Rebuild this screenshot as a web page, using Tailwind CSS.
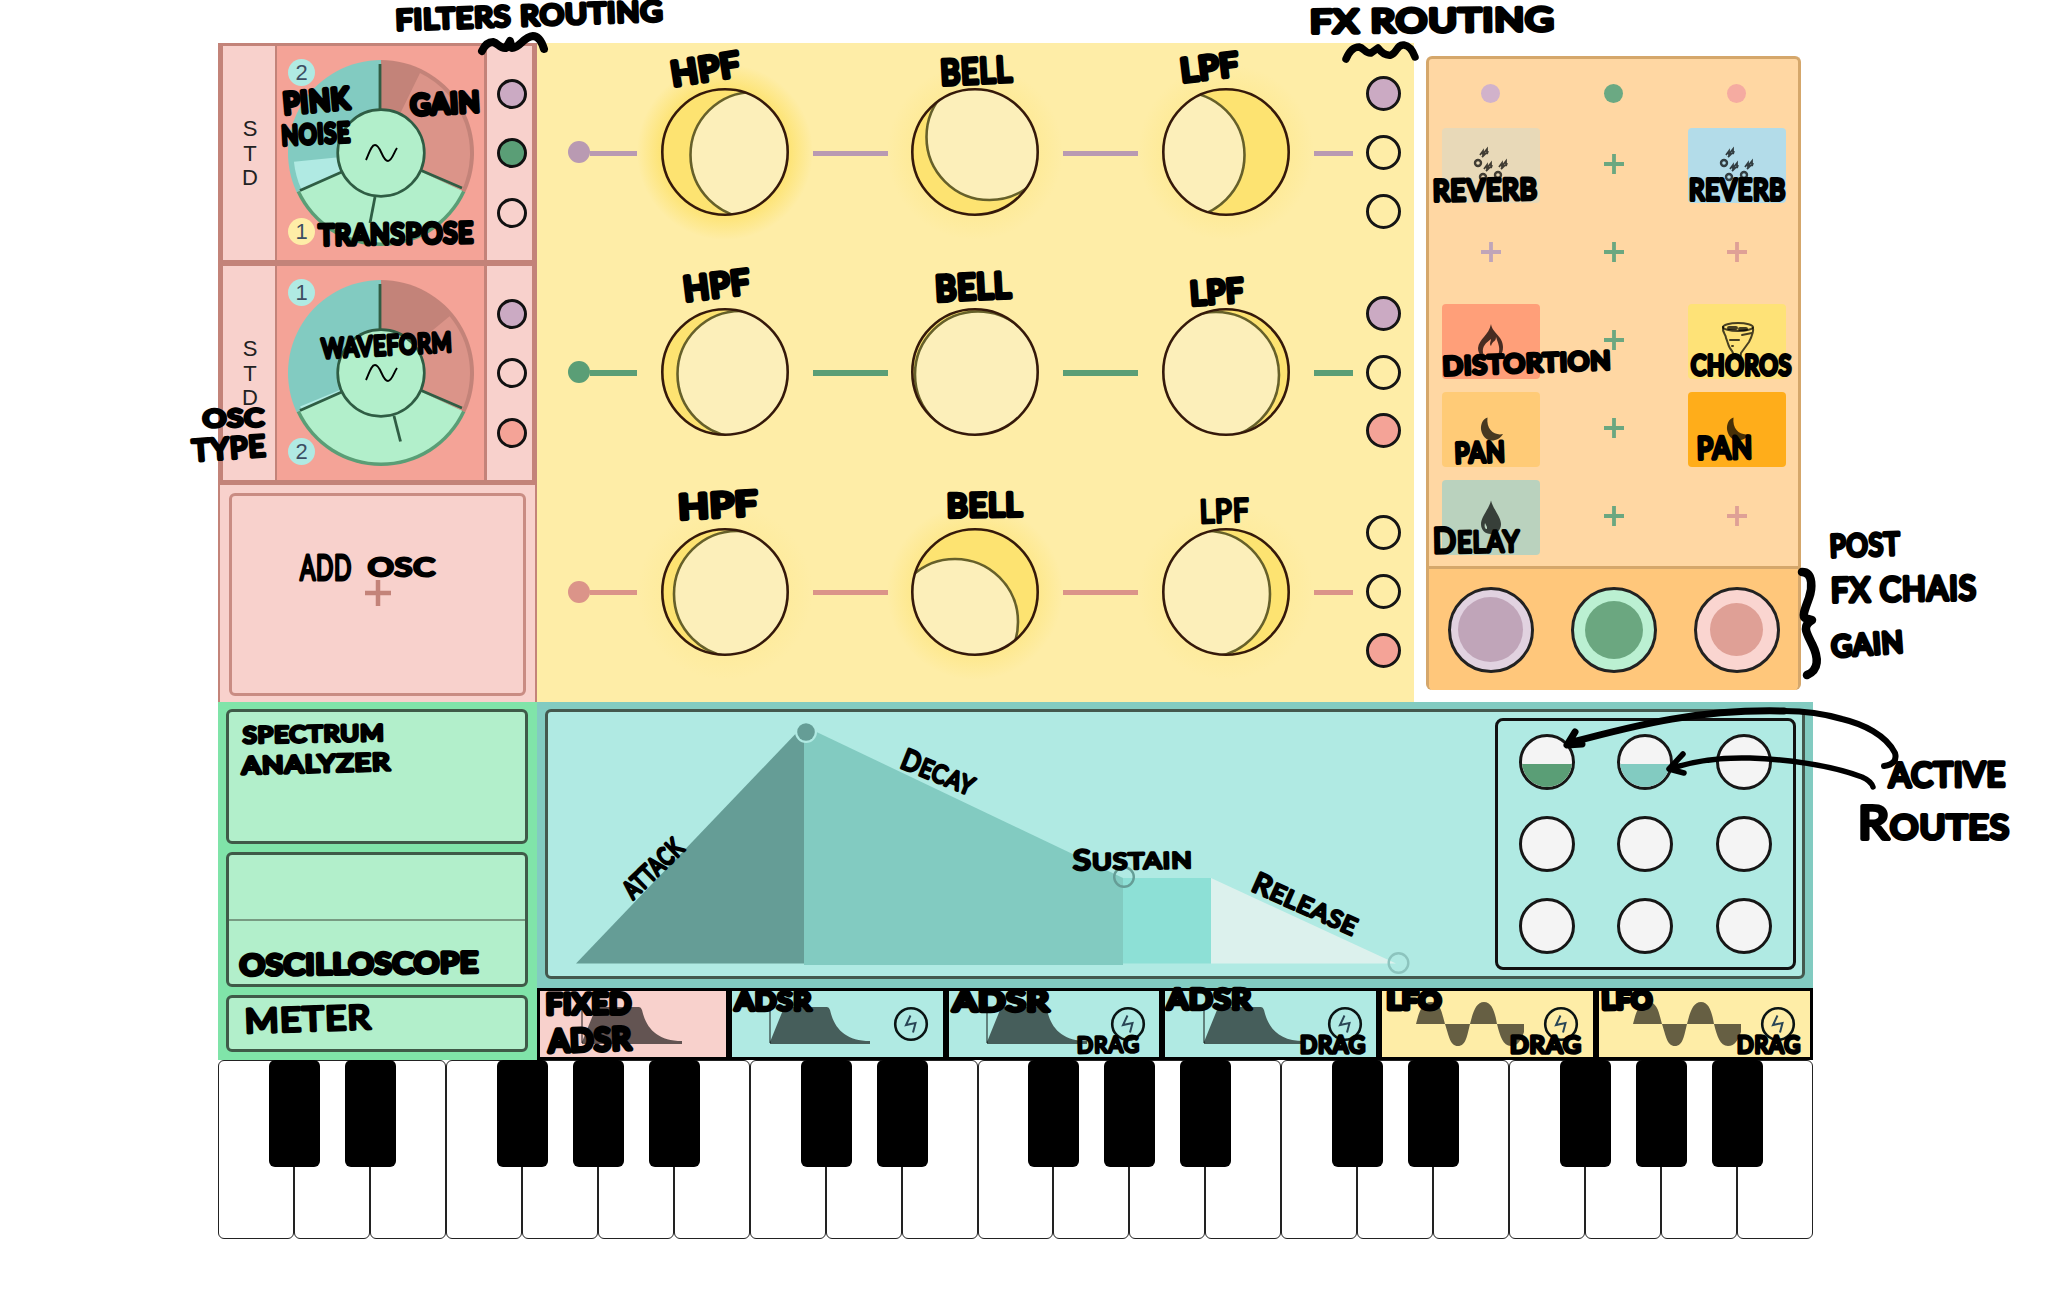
<!DOCTYPE html>
<html lang="en">
<head>
<meta charset="utf-8">
<title>Synth layout</title>
<script src="https://cdn.jsdelivr.net/npm/@tailwindcss/browser@4"></script>
</head>
<body class="relative h-[1301px] w-[2051px] overflow-hidden bg-white font-['Liberation_Sans',Arial,sans-serif]">

<!-- shared symbols -->
<svg width="0" height="0" class="absolute">
  <defs>
    <radialGradient id="glowStrong"><stop offset="0.7" stop-color="#fde371"/><stop offset="1" stop-color="#fde371" stop-opacity="0"/></radialGradient>
    <radialGradient id="glowSoft"><stop offset="0.7" stop-color="#fde371" stop-opacity="0.5"/><stop offset="1" stop-color="#fde371" stop-opacity="0"/></radialGradient>
    <clipPath id="disc"><circle cx="63" cy="63" r="63"/></clipPath>
    <symbol id="reverb" viewBox="0 0 98 75"><g fill="none" stroke="#000" stroke-opacity=".72" stroke-width="2.4"><circle cx="36" cy="35" r="3"/><circle cx="41" cy="49" r="3"/><circle cx="56" cy="47" r="3"/><path stroke-width="1.8" d="M38 27l3-4v3l4-5v5l1-3M40 29l4-4M42 41l3-4v3l4-5v5l1-3M44 43l4-4M57 39l3-4v3l4-5v5l1-3M59 41l4-4"/></g></symbol>
    <symbol id="fire" viewBox="0 0 98 75"><path fill="#000" fill-opacity=".72" fill-rule="evenodd" d="M49 20C50 29 61 32 61 43C61 50 58 55 49 56C40 55 36 50 36 44C37 35 47 31 49 20ZM54 33C54 38 51 36 49 42C47 40 49 37 49 35C44 39 40 42 41 49C43 53 56 54 57 48C58 43 56 39 54 33Z"/></symbol>
    <symbol id="tornado" viewBox="0 0 98 75"><g fill="none" stroke="#000" stroke-opacity=".72" stroke-width="2" stroke-linecap="round" stroke-linejoin="round"><ellipse cx="50" cy="23" rx="15" ry="4"/><path d="M35 23C34 29 38 30 38 34C40 38 40 43 44 47C46 51 47 56 52 57L53 49L61 38C63 34 66 27 65 24M54 31L64 29M42 36h9M44 42h1"/><path stroke-width="4" d="M41 24h7M52 25h6"/></g></symbol>
    <symbol id="moon" viewBox="0 0 98 75"><path fill="#000" fill-opacity=".72" d="M45.500 25.500C36 29 37 45 48 48.500C54 49 59 46 61 42C53 44 44 38 45.500 25.500Z"/></symbol>
    <symbol id="drop" viewBox="0 0 98 75"><path fill="#000" fill-opacity=".7" d="M49 20.500C51 29 59 37 59 44C59 50 55 54 49 54C43 54 39 50 39 44C39 37 47 29 49 20.500Z"/><path d="M43 43C42 47 43 49 45 49L45 47Z" fill="#bad2be"/></symbol>
    <symbol id="adsr" viewBox="0 0 102 40"><path d="M1 0V39" stroke="#000" stroke-opacity=".6" stroke-width="1.500" fill="none"/><path fill="#000" fill-opacity=".6" d="M1 38L14 6Q15 3 18 3H58Q60 3 61 6C65 24 76 37 101 37V40H1Z"/></symbol>
    <symbol id="lfo" viewBox="0 0 108 44"><path fill="#000" fill-opacity=".6" d="M0 22C3 10 6 0 15 0C25 0 26 12 29 22C33 34 34 44 42 44C50 44 51 34 54 22C57 10 60 0 68 0C76 0 79 10 81 22C84 34 87 44 95 44C102 44 105 38 108 30V22Z"/></symbol>
    <symbol id="bolt" viewBox="0 0 36 36"><circle cx="18" cy="18" r="15.800" fill="none" stroke="#0a1414" stroke-width="2.600"/><path d="M17.500 9.500L13 19L22.500 17L20 26.500" fill="none" stroke="#2a4656" stroke-width="2"/></symbol>
  </defs>
</svg>

<main class="flex w-[1595px] flex-col pt-[43px] ml-[218px]">
  <div class="flex h-[659px]">
    <!-- oscillators -->
    <section class="flex w-[319px] flex-col bg-[#f8d1cc]">
      <div class="flex h-[220px] border-x-[5px] border-t-[3px] border-b-[3px] border-[#c38379]">
        <div class="flex w-[54px] flex-col items-center justify-center border-r-[2.500px] border-[#c38379] pt-[2px] pl-[2px] text-[22px] leading-[24.500px] text-[#222]"><span>S</span><span>T</span><span>D</span></div>
        <div class="relative flex-1 bg-[#f4a397]" data-dial="1"></div>
        <div class="flex w-[48px] flex-col items-center justify-center gap-[29.500px] border-l-[3px] border-[#c38379] pl-[5px]">
          <i class="size-[30px] rounded-full border-[3px] border-[#111] bg-[#cbaac3]"></i><i class="size-[30px] rounded-full border-[3px] border-[#111] bg-[#5a9e76]"></i><i class="size-[30px] rounded-full border-[3px] border-[#111]"></i>
        </div>
      </div>
      <div class="flex h-[222px] border-x-[5px] border-t-[3px] border-b-[5px] border-[#c38379]">
        <div class="flex w-[54px] flex-col items-center justify-center border-r-[2.500px] border-[#c38379] pt-[2px] pl-[2px] text-[22px] leading-[24.500px] text-[#222]"><span>S</span><span>T</span><span>D</span></div>
        <div class="relative flex-1 bg-[#f4a397]" data-dial="2"></div>
        <div class="flex w-[48px] flex-col items-center justify-center gap-[29.500px] border-l-[3px] border-[#c38379] pl-[5px]">
          <i class="size-[30px] rounded-full border-[3px] border-[#111] bg-[#cbaac3]"></i><i class="size-[30px] rounded-full border-[3px] border-[#111]"></i><i class="size-[30px] rounded-full border-[3px] border-[#111] bg-[#f4a397]"></i>
        </div>
      </div>
      <div class="flex flex-1 border-x-[2.500px] border-[#c38379] px-[9px] pt-2 pb-[6px]">
        <div class="flex flex-1 items-center justify-center rounded-md border-[3px] border-[#c98c83] pb-[3px]">
          <svg width="26" height="26"><path d="M13 0V26M0 13H26" stroke="#c38379" stroke-width="4.500"/></svg>
        </div>
      </div>
    </section>

    <!-- filters -->
    <section id="filters" class="flex w-[877px] flex-col bg-[#feeda7]"></section>

    <!-- effects -->
    <section class="mt-[13px] ml-3 flex h-[634px] w-[375px] flex-col overflow-hidden rounded-md border-[3px] border-b-0 border-[#d5a76b] bg-[#ffd7a3]">
      <div class="flex h-[507px] flex-col pt-[25px]">
        <div class="grid grid-cols-3 justify-items-center">
          <i class="size-[19px] rounded-full bg-[#d1b2cb]"></i><i class="size-[19px] rounded-full bg-[#6ba983]"></i><i class="size-[19px] rounded-full bg-[#f5aba1]"></i>
        </div>
        <div id="slots" class="mt-[25px] grid grid-cols-3 items-center justify-items-center gap-y-[13px]"></div>
      </div>
      <div class="grid flex-1 grid-cols-3 items-center justify-items-center border-t-[3px] border-[#d5a76b] bg-[#ffc77b]">
        <span class="flex size-[86px] items-center justify-center rounded-full border-[3px] border-[#222] bg-[#e1d2e0]"><i class="size-[65px] rounded-full bg-[#c0a5b9]"></i></span>
        <span class="flex size-[86px] items-center justify-center rounded-full border-[3px] border-[#222] bg-[#bbf0d2]"><i class="size-[58px] rounded-full bg-[#6ba780]"></i></span>
        <span class="flex size-[86px] items-center justify-center rounded-full border-[3px] border-[#222] bg-[#fad5d0]"><i class="size-[53px] rounded-full bg-[#dfa096]"></i></span>
      </div>
    </section>
  </div>

  <div class="flex h-[358px]">
    <!-- analysers -->
    <section class="flex w-[319px] flex-col gap-[8px] bg-[#80e4a9] pr-[9px] pl-2 pt-[7px] pb-2">
      <div class="h-[135px] rounded-md border-[3px] border-[#3f5a48] bg-[#b2efcb]"></div>
      <div class="flex h-[135px] flex-col justify-center rounded-md border-[3px] border-[#3f5a48] bg-[#b2efcb]"><div class="h-[2px] bg-[#789b82]"></div></div>
      <div class="flex-1 rounded-md border-[3px] border-[#3f5a48] bg-[#b2efcb]"></div>
    </section>

    <section class="flex flex-1 flex-col">
      <div class="h-[286px] bg-[#82cbc1] px-[8px] pt-[7px] pb-[9px]">
        <div class="flex h-full items-center justify-between rounded-md border-[3px] border-[#44584e] bg-[#b0eae3] pr-[6px]">
          <!-- envelope -->
          <svg width="880" height="264" viewBox="548 712 880 264">
            <path d="M576 963.500L804 725V963.500Z" fill="#659d96"/>
            <path d="M804 726L1123 878V965H804Z" fill="#82cbc1"/>
            <path d="M1123 878H1211V963.500H1123Z" fill="#8de0d6"/>
            <path d="M1211 878L1396 963.500H1211Z" fill="#dcf1ed"/>
            <circle cx="806" cy="732" r="11" fill="#b0eae3"/><circle cx="806" cy="732" r="8.800" fill="#659d96"/>
            <circle cx="1124" cy="877" r="9.800" fill="none" stroke="#659d96" stroke-width="2.400"/>
            <circle cx="1398.500" cy="963" r="9.800" fill="none" stroke="#8cc4be" stroke-width="2.400"/>
          </svg>
          <div id="routes" class="grid h-[252px] w-[301px] grid-cols-3 items-center justify-items-center rounded-lg border-[3px] border-[#111]"></div>
        </div>
      </div>
      <!-- modulators -->
      <div class="flex flex-1">
        <div class="flex w-[192px] items-center border-[3px] border-black bg-[#f8d1cc] pl-[41px]"><svg width="101" height="40"><use href="#adsr" width="102" height="40"/></svg></div>
        <div class="flex w-[217px] items-center justify-between border-[3px] border-black bg-[#b0eae3] pr-[14px] pl-[37px]"><svg width="102" height="40"><use href="#adsr" width="102" height="40"/></svg><svg width="36" height="36"><use href="#bolt"/></svg></div>
        <div class="flex w-[216px] items-center justify-between border-[3px] border-black bg-[#b0eae3] pr-[13px] pl-[37px]"><svg width="102" height="40"><use href="#adsr" width="102" height="40"/></svg><svg width="36" height="36"><use href="#bolt"/></svg></div>
        <div class="flex w-[217px] items-center justify-between border-[3px] border-black bg-[#b0eae3] pr-[13px] pl-[38px]"><svg width="102" height="40"><use href="#adsr" width="102" height="40"/></svg><svg width="36" height="36"><use href="#bolt"/></svg></div>
        <div class="flex w-[217px] items-center justify-between border-[3px] border-black bg-[#feeda7] pr-[14px] pl-[34px]"><svg width="108" height="44"><use href="#lfo" width="108" height="44"/></svg><svg width="36" height="36"><use href="#bolt"/></svg></div>
        <div class="flex w-[217px] items-center justify-between border-[3px] border-black bg-[#feeda7] pr-[14px] pl-[34px]"><svg width="108" height="44"><use href="#lfo" width="108" height="44"/></svg><svg width="36" height="36"><use href="#bolt"/></svg></div>
      </div>
    </section>
  </div>

  <!-- keyboard -->
  <div id="keys" class="flex h-[179px]"></div>
</main>

<!-- pen annotations over the panel -->
<svg id="pen" class="absolute inset-0 font-['Lato','Open_Sans',sans-serif]" width="2051" height="1301" viewBox="0 0 2051 1301">
  <g fill="none" stroke="#000" stroke-linecap="round" stroke-linejoin="round">
    <path stroke-width="8" d="M482 51Q486 42 493 42C498 43 500 49 506 48L510 41L512 48C520 48 523 37 533 36Q540 36 544 49"/>
    <path stroke-width="7.500" d="M1346 59Q1351 47 1359 47C1364 48 1366 54 1371 53L1378 48C1381 52 1385 56 1391 55C1397 53 1397 44 1404 45Q1411 46 1415 57"/>
    <path stroke-width="8.500" d="M1802 572C1814 572 1812 590 1809 598C1805 609 1802 616 1805 618L1812 620C1802 626 1806 632 1812 644C1819 658 1819 670 1807 675"/>
    <path stroke-width="6" d="M1884 766Q1898 764 1895 753C1886 735 1863 724 1842 719Q1815 711 1784 711"/>
    <path stroke-width="7" d="M1784 711C1700 709 1640 724 1569 743M1575 732L1567 745L1582 744"/>
    <path stroke-width="5.500" d="M1873 787Q1871 781 1862 777C1830 765 1785 759 1750 758C1715 757 1690 762 1670 769M1683 754L1669 769L1684 773"/>
  </g>
</svg>

<script>
// dials
const rad = a => a * Math.PI / 180;
const wedge = (r, a, b, fill) => `<path fill="${fill}" d="M93 93L${93 + r * Math.cos(rad(a))} ${93 + r * Math.sin(rad(a))}A${r} ${r} 0 ${b - a > 180 ? 1 : 0} 1 ${93 + r * Math.cos(rad(b))} ${93 + r * Math.sin(rad(b))}Z"/>`;
const dials = {
  1: { gain: -64, rest: 174.3, tick: 'M87 137L82 163', badges: ['2', '1'], low: '#feeda7' },
  2: { gain: -39.6, rest: 157.500, tick: 'M106 136L112.500 161.500', badges: ['1', '2'], low: '#b0eae3' }
};
document.querySelectorAll('[data-dial]').forEach(el => {
  const d = dials[el.dataset.dial];
  el.innerHTML = `<div class="flex h-full items-center justify-center"><svg width="186" height="186" viewBox="0 0 186 186">
    ${wedge(93, -90, 25, '#c38379')}${wedge(89, d.gain, 25, '#db9489')}
    ${wedge(93, 155, 270, '#82cbc1')}${wedge(87.500, 155, d.rest, '#b0eae3')}
    ${wedge(93, 25, 155, '#5a9e76')}${wedge(89.500, 25, 155, '#b2efcb')}
    <g fill="none" stroke="#2f5d44" stroke-width="2.800"><path d="M92 4V50M12 130.500L56 111M174 128L131 109.500"/><path d="${d.tick}"/></g>
    <circle cx="93" cy="93" r="43.300" fill="#b2efcb" stroke="#2f5d44" stroke-width="2.700"/>
    <path d="M78 100C81 94 83 85 87 85C93 85 94 101 100 101C104 101 106 92 109 88" fill="none" stroke="#000" stroke-width="1.900"/></svg></div>
    <span class="absolute top-[13px] left-[11px] flex size-[27px] items-center justify-center rounded-full bg-[#b0eae3] text-[22px] leading-none text-[#3d4f63]">${d.badges[0]}</span>
    <span class="absolute bottom-[15px] left-[11px] flex size-[27px] items-center justify-center rounded-full text-[22px] leading-none text-[#3d4f63]" style="background:${d.low}">${d.badges[1]}</span>`;
});

// filter rows: shade offset and glow of each knob
const rows = [
  { c: '#b99ab2', k: [[28.500, 3, 's'], [14.500, -15, 'f'], [-44.500, 3, 'f']], r: ['#cbaac3', '', ''] },
  { c: '#5a9e76', k: [[15.500, 2, ''], [3, 2.500, ''], [-10, 3, '']], r: ['#cbaac3', '', '#f4a397'] },
  { c: '#db9489', k: [[12, 2, 'h'], [-20, 30, 'g'], [-19, 2, 'h']], r: ['', '', '#f4a397'] }
];
const glows = { s: ['glowStrong', 1], g: ['glowSoft', 1], f: ['glowSoft', .55], h: ['glowSoft', .35] };
const knob = ([x, y, g]) => `<svg class="shrink-0 overflow-visible" width="126" height="126">${g ? `<circle cx="63" cy="63" r="88" fill="url(#${glows[g][0]})" opacity="${glows[g][1]}"/>` : ''}
  <circle cx="63" cy="63" r="63" fill="#fde371"/><g clip-path="url(#disc)"><circle cx="${63 + x}" cy="${63 + y}" r="63" fill="#fcefba" stroke="#66602a" stroke-width="2.600"/></g>
  <circle cx="63" cy="63" r="62.700" fill="none" stroke="#35190a" stroke-width="2.600"/></svg>`;
const bar = (w, c) => `<i class="mt-[2px] h-[5.500px] shrink-0" style="width:${w}px;background:${c}"></i>`;
document.getElementById('filters').innerHTML = rows.map(o => `<div class="flex flex-1 items-center gap-[24.800px] pb-px pl-[31px]">
  <span class="flex items-center"><i class="size-[22px] shrink-0 rounded-full" style="background:${o.c}"></i>${bar(47, o.c)}</span>
  ${knob(o.k[0])}${bar(75, o.c)}${knob(o.k[1])}${bar(75, o.c)}${knob(o.k[2])}${bar(39, o.c)}
  <span class="-ml-3 flex flex-col gap-[23.700px]">${o.r.map(f => `<i class="size-[35px] rounded-full border-[3px] border-[#151515]" style="background:${f || 'transparent'}"></i>`).join('')}</span></div>`).join('');

// effect slots
const fx = [['#e8d9b8', 'reverb'], 0, ['#b3dce9', 'reverb'], 0, 0, 0, ['#ff9f79', 'fire'], 0, ['#fee277', 'tornado'], ['#ffcb77', 'moon'], 0, ['#ffad1a', 'moon'], ['#bad2be', 'drop'], 0, 0];
const plus = ['#c0a5b9', '#6ba780', '#dfa096'];
document.getElementById('slots').innerHTML = fx.map((s, i) => s
  ? `<div class="h-[75px] w-[98px] rounded" style="background:${s[0]}"><svg width="98" height="75"><use href="#${s[1]}" width="98" height="75"/></svg></div>`
  : `<div class="flex h-[75px] items-center pb-[3px]"><svg width="20" height="20"><path d="M10 0V20M0 10H20" stroke="${plus[i % 3]}" stroke-width="3.800"/></svg></div>`).join('');

// modulation routes
document.getElementById('routes').innerHTML = Array.from({ length: 9 }, (_, i) =>
  `<span class="flex size-[56px] flex-col justify-end overflow-hidden rounded-full border-[3px] border-[#161616] bg-[#f4f4f4]">${i < 2 ? `<i class="h-[23px]" style="background:${['#5a9e76', '#82cbc1'][i]}"></i>` : ''}</span>`).join('');

// keys
document.getElementById('keys').innerHTML = Array.from({ length: 21 }, (_, i) =>
  `<div class="relative flex-1 rounded-md border border-[#222] bg-white">${[0, 1, 3, 4, 5].includes(i % 7) ? '<i class="absolute -top-px -right-[27px] z-10 h-[107px] w-[51px] rounded-md bg-black"></i>' : ''}</div>`).join('');

// handwriting: text, left, baseline, width, cap height, rotation, pen width, first letter scale
const notes = [
  ['FILTERS ROUTING', 396, 30, 268, 20, -2, 4], ['FX ROUTING', 1310, 33, 245, 23, -.6, 4.3],
  ['HPF', 673, 86, 70, 24, -9, 5], ['BELL', 941, 85, 72, 25, -3, 4.500], ['LPF', 1182, 82, 59, 23, -7, 5],
  ['HPF', 685, 301, 67, 24, -7, 5], ['BELL', 936, 301, 76, 25, -3, 5], ['LPF', 1191, 305, 54, 23, -4, 5],
  ['HPF', 679, 519, 80, 24, -3, 5], ['BELL', 947, 517, 76, 23, -1, 4.500], ['LPF', 1200, 523, 50, 23, -2, 3],
  ['PINK', 284, 114, 67, 21, -5, 5], ['NOISE', 282, 145, 69, 19, -3, 4.500], ['GAIN', 411, 115, 70, 20, -3, 5],
  ['TRANSPOSE', 319, 245, 155, 20, -1, 4.500], ['WAVEFORM', 322, 358, 131, 19, -3, 4],
  ['OSC', 203, 427, 62, 17, -1, 3.800], ['TYPE', 193, 461, 74, 21, -4, 3.800],
  ['ADD', 300, 580, 52, 25, 0, 3], ['OSC', 368, 576, 68, 18, 0, 3.200],
  ['REVERB', 1433, 201, 105, 21, -1, 4], ['REVERB', 1689, 200, 97, 21, 0, 4],
  ['DISTORTION', 1443, 375, 169, 18, -2, 4], ['CHOROS', 1691, 375, 101, 19, 0, 4],
  ['PAN', 1455, 463, 51, 20, -2, 4], ['PAN', 1697, 459, 56, 22, -1, 4], ['DELAY', 1433, 553, 87, 21, -1, 3.500, 1.2],
  ['POST', 1830, 557, 71, 22, -2, 4], ['FX CHAIS', 1831, 602, 146, 24, -1, 4], ['GAIN', 1832, 657, 73, 21, -4, 4.200],
  ['ACTIVE', 1889, 787, 117, 24, -.5, 4.200], ['ROUTES', 1858, 839, 152, 24, 0, 4.200, 1.4],
  ['SPECTRUM', 243, 743, 142, 16, -1, 3.400], ['ANALYZER', 242, 774, 149, 17, -1.500, 3.400],
  ['OSCILLOSCOPE', 240, 975, 239, 20, -.7, 4.500], ['METER', 245, 1033, 127, 24, -2, 3.200],
  ['ATTACK', 633, 900, 73, 18, -44, 3], ['DECAY', 899, 767, 77, 18, 22, 2.800, 1.15], ['SUSTAIN', 1073, 870, 120, 16, -1, 2.800, 1.25], ['RELEASE', 1250, 890, 113, 17, 24, 2.800, 1.2],
  ['FIXED', 546, 1014, 86, 20, -.5, 5], ['ADSR', 549, 1052, 83, 22, -2, 5],
  ['ADSR', 735, 1010, 77, 18, 0, 4.500], ['ADSR', 953, 1011, 97, 19, 0, 4.500], ['ADSR', 1167, 1009, 85, 19, 0, 4.500],
  ['LFO', 1387, 1009, 55, 17, 0, 5], ['LFO', 1602, 1009, 51, 17, -1, 5],
  ['DRAG', 1077, 1053, 63, 16, -1, 3], ['DRAG', 1300, 1053, 66, 17, 0, 3.500], ['DRAG', 1510, 1053, 72, 17, 0, 3.500], ['DRAG', 1737, 1053, 64, 17, 0, 3.500]
];
document.getElementById('pen').insertAdjacentHTML('beforeend', notes.map(([t, x, y, w, h, a, p, k]) => {
  const size = h / .72;
  const body = k ? `<tspan font-size="${(size * k).toFixed(1)}">${t[0]}</tspan>${t.slice(1)}` : t;
  return `<text transform="translate(${x} ${y}) rotate(${a})" font-size="${size.toFixed(1)}" letter-spacing="1" textLength="${w}" lengthAdjust="spacingAndGlyphs" stroke="#000" stroke-width="${p}" stroke-linejoin="round">${body}</text>`;
}).join(''));
</script>
</body>
</html>
